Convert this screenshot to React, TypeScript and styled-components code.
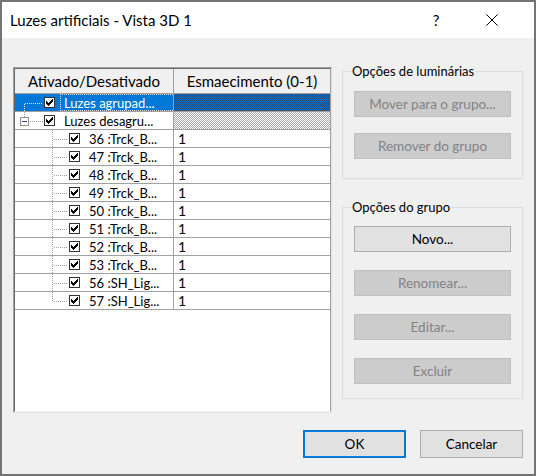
import React from 'react';
import styled, { createGlobalStyle, css } from 'styled-components';

const GlobalStyle = createGlobalStyle`
  html, body {
    margin: 0;
    padding: 0;
    width: 536px;
    height: 476px;
    overflow: hidden;
    background: #f0f0f0;
  }
`;

const uiFont = `Lato, "Noto Sans", sans-serif`;

const Window = styled.div`
  width: 536px;
  height: 476px;
  box-sizing: border-box;
  border: 2px solid #747474;
  display: flex;
  flex-direction: column;
  background: #f0f0f0;
  font-family: ${uiFont};
  color: #000;
`;

const TitleBar = styled.div`
  height: 36px;
  flex: none;
  background: #fff;
  display: flex;
  align-items: center;
  padding: 0 14px 0 8px;
`;

const Title = styled.div`
  flex: 1;
  font-size: 15px;
`;

const TitleButton = styled.div`
  width: 56px;
  height: 36px;
  display: flex;
  align-items: center;
  justify-content: center;
  font-size: 15px;
`;

const Body = styled.div`
  flex: 1;
  display: flex;
  flex-direction: column;
  padding: 0 11px;
`;

const Main = styled.div`
  display: flex;
  align-items: flex-start;
  gap: 10px;
`;

/* sunken list frame: light outer edge, dark inner edge */
const ListFrame = styled.div`
  margin-top: 29px;
  width: 319px;
  height: 346px;
  box-sizing: border-box;
  border: 1px solid;
  border-color: #a0a0a0 #e3e3e3 #e3e3e3 #a0a0a0;
`;

const ListInner = styled.div`
  height: 100%;
  box-sizing: border-box;
  border: 1px solid;
  border-color: #696969 #a0a0a0 #f0f0f0 #696969;
  background: #fff;
  overflow: hidden;
`;

const columns = css`
  display: grid;
  grid-template-columns: 159px 1fr;
`;

const HeaderRow = styled.div`
  ${columns};
  height: 24px;
  border-bottom: 1px solid #a0a0a0;
  background: #f0f0f0;
`;

const HeaderCell = styled.div`
  display: flex;
  align-items: center;
  justify-content: center;
  font-size: 15px;
  white-space: nowrap;
  &:first-child {
    border-right: 1px solid #a0a0a0;
  }
`;

const Row = styled.div`
  ${columns};
  height: 18px;
  box-sizing: border-box;
  border-bottom: 1px solid #a0a0a0;
`;

const TreeCell = styled.div<{ $selected?: boolean }>`
  display: flex;
  align-items: center;
  border-right: 1px solid #a0a0a0;
  background: ${(p) => (p.$selected ? '#0078d7' : 'transparent')};
  color: ${(p) => (p.$selected ? '#fff' : '#000')};
  overflow: hidden;
`;

const Label = styled.div<{ $focused?: boolean }>`
  flex: 1;
  align-self: stretch;
  display: flex;
  align-items: center;
  margin-left: 5px;
  padding-left: 3px;
  border: 1px dotted ${(p) => (p.$focused ? '#e0e0e0' : 'transparent')};
  border-right: none;
  font-size: 13px;
  white-space: nowrap;
  overflow: hidden;
`;

const hatch = (a: string, b: string) => css`
  background: repeating-conic-gradient(${a} 0 25%, ${b} 0 50%) 0 0 / 2px 2px;
`;

const ValueCell = styled.div<{ $hatch?: 'blue' | 'gray' }>`
  display: flex;
  align-items: center;
  padding-left: 4px;
  font-size: 14px;
  ${(p) => p.$hatch === 'blue' && hatch('#0078d7', '#27426b')};
  ${(p) => p.$hatch === 'gray' && hatch('#a8a8a8', '#ffffff')};
`;

const Panel = styled.div`
  width: 181px;
  padding-top: 24px;
  display: flex;
  flex-direction: column;
  gap: 19px;
`;

const GroupBox = styled.fieldset<{ $top: number; $bottom: number; $gap: number }>`
  margin: 0;
  padding: ${(p) => p.$top}px 11px ${(p) => p.$bottom}px;
  border: 1px solid #dcdcdc;
  display: flex;
  flex-direction: column;
  gap: ${(p) => p.$gap}px;
  min-width: 0;
`;

const Legend = styled.legend`
  margin-left: -3px;
  padding: 0 1px;
  font-size: 13px;
  line-height: 18px;
`;

const Button = styled.button<{ $default?: boolean }>`
  height: 26px;
  width: 100%;
  padding: 0;
  font-family: ${uiFont};
  font-size: 13.5px;
  background: #e1e1e1;
  border: 1px solid #adadad;
  color: #000;
  border-radius: 0;
  &:disabled {
    background: #cccccc;
    border-color: #bfbfbf;
    color: #838383;
  }
`;

const Footer = styled.div`
  display: flex;
  justify-content: flex-end;
  gap: 14px;
  margin-top: 17px;
`;

const DialogButton = styled(Button)`
  width: 103px;
  height: 28px;
  ${(p) =>
    p.$default &&
    css`
      border: 2px solid #0078d7;
    `}
`;

const CheckPath =
  'M2 4h1v3h-1zM3 5h1v3h-1zM4 6h1v3h-1zM5 5h1v3h-1zM6 4h1v3h-1zM7 3h1v3h-1zM8 2h1v3h-1z';

const CheckBox = () => (
  <svg width="11" height="11" viewBox="0 0 11 11" style={{ flex: 'none' }}>
    <rect x="0.5" y="0.5" width="10" height="10" fill="#fff" stroke="#333" />
    <path d={CheckPath} fill="#000" />
  </svg>
);

type Connector = 'first' | 'expanded' | 'child' | 'lastChild';

const TreeLines: React.FC<{ kind: Connector; color: string }> = ({ kind, color }) => {
  const dot = { stroke: color, strokeDasharray: '1 1', shapeRendering: 'crispEdges' as const };
  if (kind === 'first') {
    return (
      <svg width="29" height="17" style={{ flex: 'none' }}>
        <line x1="9.5" y1="9.5" x2="28" y2="9.5" {...dot} />
        <line x1="9.5" y1="9.5" x2="9.5" y2="17" {...dot} />
      </svg>
    );
  }
  if (kind === 'expanded') {
    return (
      <svg width="29" height="17" style={{ flex: 'none' }}>
        <line x1="9.5" y1="0" x2="9.5" y2="5" {...dot} />
        <rect x="5.5" y="5.5" width="8" height="8" fill="#fff" stroke="#919191" shapeRendering="crispEdges" />
        <line x1="7" y1="9.5" x2="12" y2="9.5" stroke="#2b4a86" shapeRendering="crispEdges" />
        <line x1="15" y1="9.5" x2="28" y2="9.5" {...dot} />
      </svg>
    );
  }
  return (
    <svg width="54" height="17" style={{ flex: 'none' }}>
      <line x1="37.5" y1="0" x2="37.5" y2={kind === 'lastChild' ? 9.5 : 17} {...dot} />
      <line x1="39" y1="9.5" x2="53" y2="9.5" {...dot} />
    </svg>
  );
};

const lights = [
  '36 :Trck_B...',
  '47 :Trck_B...',
  '48 :Trck_B...',
  '49 :Trck_B...',
  '50 :Trck_B...',
  '51 :Trck_B...',
  '52 :Trck_B...',
  '53 :Trck_B...',
  '56 :SH_Lig...',
  '57 :SH_Lig...',
];

const App: React.FC = () => {
  return (
    <>
      <GlobalStyle />
      <Window>
        <TitleBar>
          <Title>Luzes artificiais - Vista 3D 1</Title>
          <TitleButton>?</TitleButton>
          <TitleButton>
            <svg width="12" height="12" viewBox="0 0 12 12">
              <path d="M0.5 0.5L11.5 11.5M11.5 0.5L0.5 11.5" stroke="#000" strokeWidth="1" />
            </svg>
          </TitleButton>
        </TitleBar>
        <Body>
          <Main>
            <ListFrame>
              <ListInner>
                <HeaderRow>
                  <HeaderCell>Ativado/Desativado</HeaderCell>
                  <HeaderCell>Esmaecimento (0-1)</HeaderCell>
                </HeaderRow>
                <Row>
                  <TreeCell $selected>
                    <TreeLines kind="first" color="#e8e8e8" />
                    <CheckBox />
                    <Label $focused>Luzes agrupad...</Label>
                  </TreeCell>
                  <ValueCell $hatch="blue" />
                </Row>
                <Row>
                  <TreeCell>
                    <TreeLines kind="expanded" color="#a0a0a0" />
                    <CheckBox />
                    <Label>Luzes desagru...</Label>
                  </TreeCell>
                  <ValueCell $hatch="gray" />
                </Row>
                {lights.map((name, i) => (
                  <Row key={name}>
                    <TreeCell>
                      <TreeLines kind={i === lights.length - 1 ? 'lastChild' : 'child'} color="#a0a0a0" />
                      <CheckBox />
                      <Label>{name}</Label>
                    </TreeCell>
                    <ValueCell>1</ValueCell>
                  </Row>
                ))}
              </ListInner>
            </ListFrame>
            <Panel>
              <GroupBox $top={11} $bottom={19} $gap={16}>
                <Legend>Opções de luminárias</Legend>
                <Button disabled>Mover para o grupo...</Button>
                <Button disabled>Remover do grupo</Button>
              </GroupBox>
              <GroupBox $top={10} $bottom={14} $gap={18}>
                <Legend>Opções do grupo</Legend>
                <Button>Novo...</Button>
                <Button disabled>Renomear...</Button>
                <Button disabled>Editar...</Button>
                <Button disabled>Excluir</Button>
              </GroupBox>
            </Panel>
          </Main>
          <Footer>
            <DialogButton $default>OK</DialogButton>
            <DialogButton>Cancelar</DialogButton>
          </Footer>
        </Body>
      </Window>
    </>
  );
};

export default App;
